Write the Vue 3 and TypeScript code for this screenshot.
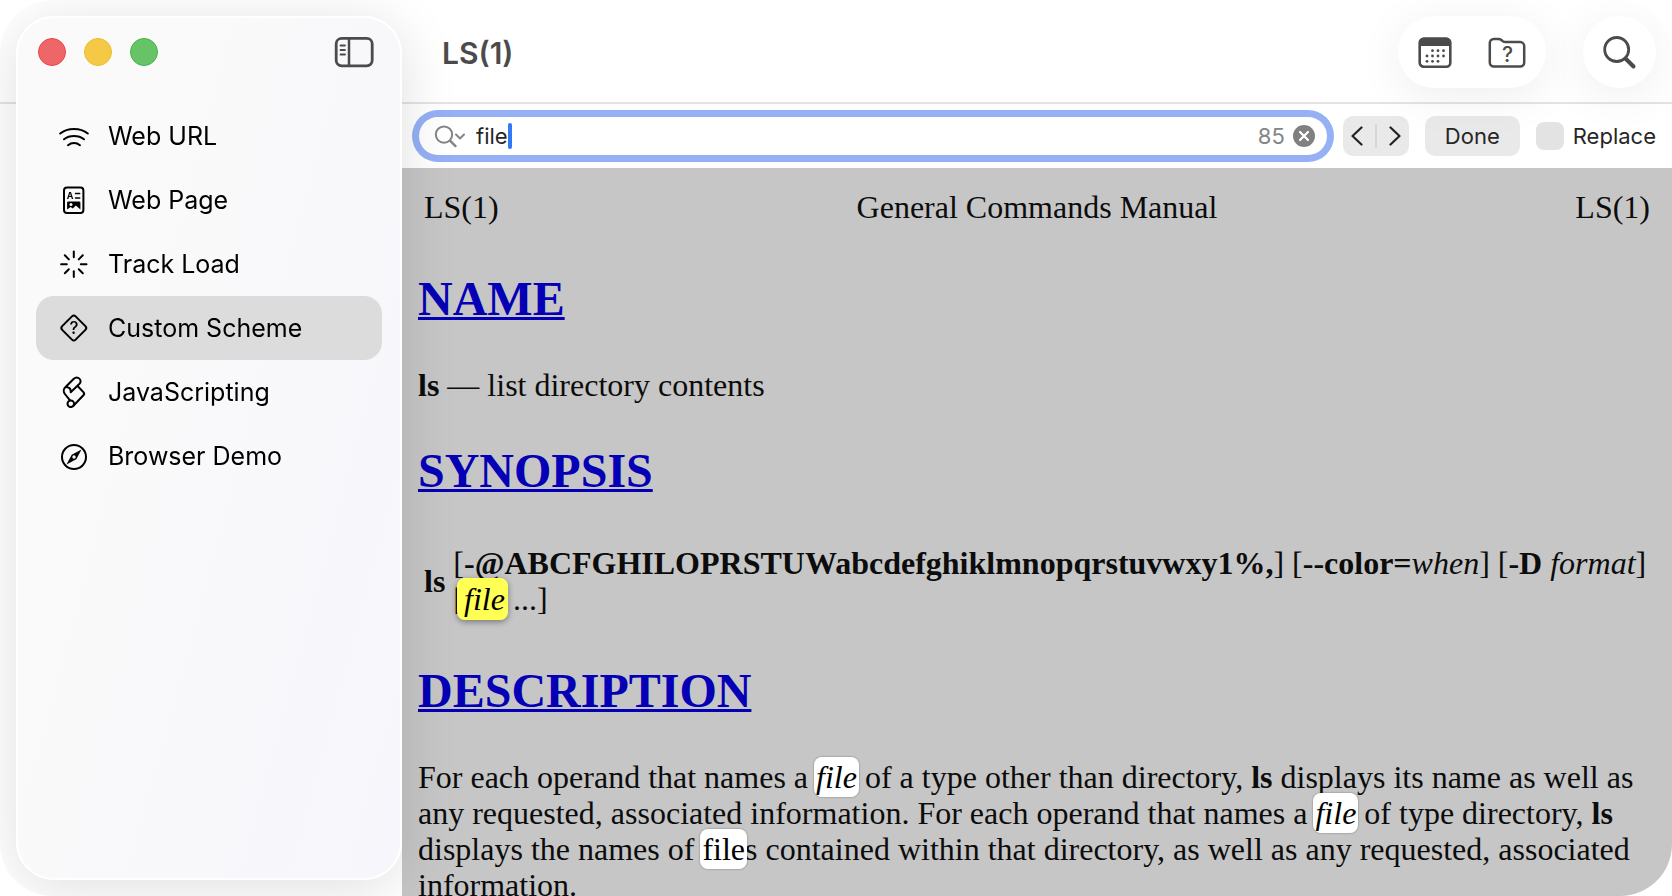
<script setup lang="ts">
import { ref } from 'vue'

type IconName = 'wifi' | 'page' | 'rays' | 'diamond' | 'scroll' | 'compass'

interface NavItem {
  label: string
  icon: IconName
}

const items: NavItem[] = [
  { label: 'Web URL', icon: 'wifi' },
  { label: 'Web Page', icon: 'page' },
  { label: 'Track Load', icon: 'rays' },
  { label: 'Custom Scheme', icon: 'diamond' },
  { label: 'JavaScripting', icon: 'scroll' },
  { label: 'Browser Demo', icon: 'compass' },
]

const selected = ref('Custom Scheme')
const query = ref('file')
const replace = ref(false)
const rayAngles = [0, 45, 90, 135, 180, 225, 270, 315]
</script>

<template>
  <div class="window">
    <header class="titlebar">
      <h2 class="title">LS(1)</h2>
      <div class="pill">
        <button type="button" class="tool" aria-label="Calendar">
          <svg width="36" height="36" viewBox="0 0 36 36" fill="none">
            <rect x="2.7" y="4.7" width="30.6" height="28" rx="4" stroke="#4b4b4b" stroke-width="2.6" />
            <path d="M2 12V8.500a5 5 0 0 1 5-5h22a5 5 0 0 1 5 5V12z" fill="#4b4b4b" />
            <g fill="#4b4b4b">
              <circle cx="15.500" cy="16.700" r="1.4" /><circle cx="21" cy="16.700" r="1.4" /><circle cx="26.500" cy="16.700" r="1.4" />
              <circle cx="10" cy="22" r="1.4" /><circle cx="15.500" cy="22" r="1.4" /><circle cx="21" cy="22" r="1.4" /><circle cx="26.500" cy="22" r="1.4" />
              <circle cx="10" cy="27.300" r="1.4" /><circle cx="15.500" cy="27.300" r="1.4" /><circle cx="21" cy="27.300" r="1.4" />
            </g>
          </svg>
        </button>
        <button type="button" class="tool" aria-label="Unknown folder">
          <svg width="40" height="36" viewBox="0 0 40 36" fill="none">
            <path d="M2.800 9a4 4 0 0 1 4-4h4.600c1.300 0 2 .3 3 1.100l1.400 1.100c.8.600 1.500.9 2.600.9h14.800a4 4 0 0 1 4 4v16.500a4 4 0 0 1-4 4H6.800a4 4 0 0 1-4-4z" stroke="#4b4b4b" stroke-width="2.500" />
            <text x="20.500" y="28" class="glyph" font-size="21" font-weight="500" fill="#4b4b4b">?</text>
          </svg>
        </button>
      </div>
      <button type="button" class="round" aria-label="Search">
        <svg width="36" height="36" viewBox="0 0 36 36" fill="none" stroke="#4b4b4b">
          <circle cx="14.700" cy="15.500" r="12" stroke-width="2.800" />
          <path d="M23.500 24.500l8 8" stroke-width="4" stroke-linecap="round" />
        </svg>
      </button>
    </header>

    <aside class="sidebar">
      <div class="controls">
        <button type="button" class="light red" aria-label="Close"></button>
        <button type="button" class="light yellow" aria-label="Minimize"></button>
        <button type="button" class="light green" aria-label="Zoom"></button>
        <button type="button" class="toggle" aria-label="Toggle sidebar">
          <svg width="40" height="32" viewBox="0 0 40 32" fill="none" stroke="#4b4b4b">
            <rect x="2.200" y="2.300" width="36" height="27.500" rx="5.500" stroke-width="2.800" />
            <path d="M15 2.500V29.500" stroke-width="2.500" />
            <path d="M6.500 9.500h4.500M6.500 14h4.500M6.500 18.500h4.500" stroke-width="1.800" stroke-linecap="round" />
          </svg>
        </button>
      </div>
      <nav class="nav">
        <button
          v-for="item in items"
          :key="item.label"
          type="button"
          class="item"
          :class="{ active: item.label === selected }"
          @click="selected = item.label"
        >
          <svg width="32" height="32" viewBox="0 0 32 32" fill="none" stroke="#000" stroke-width="2" stroke-linecap="round" stroke-linejoin="round">
            <template v-if="item.icon === 'wifi'">
              <path d="M2.200 13.500C9.500 7.500 22.500 7.500 29.800 13.500M6 19.300C11.500 15 20.500 15 26 19.300M10 25.200C13.500 22.400 18.500 22.400 22 25.200" />
            </template>
            <template v-else-if="item.icon === 'page'">
              <rect x="6" y="3.500" width="19.400" height="25.400" rx="3" />
              <text x="12" y="15" class="glyph" font-size="9" font-weight="700" fill="#000" stroke="none">A</text>
              <path d="M17.500 9.500h4.200M17.500 14h4.200" stroke-width="1.500" />
              <path d="M10.500 17.400h10.500a1.400 1.400 0 0 1 1.400 1.400v6.600l-2.200-1.900-2.400-2-3 3-2.200-1.500-3.500 2.400v-6.600a1.400 1.400 0 0 1 1.400-1.400z" fill="#000" stroke="none" />
              <circle cx="13" cy="20.600" r="1.500" fill="#fafafa" stroke="none" />
            </template>
            <template v-else-if="item.icon === 'rays'">
              <path v-for="angle in rayAngles" :key="angle" d="M15.800 9.300V3.600" :transform="`rotate(${angle} 15.800 16.300)`" />
            </template>
            <template v-else-if="item.icon === 'diamond'">
              <rect x="6.300" y="6.500" width="19" height="19" rx="2.600" transform="rotate(45 15.800 16)" />
              <text x="15.900" y="22" class="glyph" font-size="17" font-weight="500" fill="#000" stroke="none">?</text>
            </template>
            <template v-else-if="item.icon === 'scroll'">
              <path d="M11.800 24.200L6.900 18C5.300 15.900 5.400 13 7.300 11.200L15.800 2.700C19.800-.7 24.800 4.200 21.500 7.700L12.700 16.200C12.900 13.700 12 11.600 9 11.300" />
              <path d="M19.800 10.200L25.400 16.100C26.400 17.200 26.400 18.300 25.400 19.300L15.200 30" />
              <circle cx="12.800" cy="27.800" r="3.300" />
            </template>
            <template v-else>
              <circle cx="16" cy="17" r="12" />
              <path d="M23.500 9.500L18.300 19.300L8.500 24.500L13.700 14.700z" fill="#000" stroke="none" />
              <circle cx="16" cy="17" r="1.700" fill="#fafafa" stroke="none" />
            </template>
          </svg>
          <span>{{ item.label }}</span>
        </button>
      </nav>
    </aside>

    <main class="main">
      <form class="findbar" @submit.prevent>
        <label class="field">
          <svg width="32" height="24" viewBox="0 0 32 24" fill="none" stroke="#858585" stroke-width="2" stroke-linecap="round" stroke-linejoin="round">
            <circle cx="10" cy="10.600" r="8.200" />
            <path d="M16 16.600l5.500 5.500" stroke-width="2.400" />
            <path d="M22 10.500l4 4 4-4" />
          </svg>
          <input v-model="query" class="query" type="text" aria-label="Find" spellcheck="false" />
          <span class="caret"></span>
          <span class="count">85</span>
          <button type="button" class="clear" aria-label="Clear" @click="query = ''">
            <svg width="22" height="22" viewBox="0 0 22 22" fill="none">
              <circle cx="11" cy="11" r="11" fill="#808080" />
              <path d="M7 7l8 8M15 7l-8 8" stroke="#fff" stroke-width="2.200" stroke-linecap="round" />
            </svg>
          </button>
        </label>
        <div class="steps">
          <button type="button" class="step" aria-label="Previous match">
            <svg width="12" height="20" viewBox="0 0 12 20" fill="none" stroke="#222" stroke-width="2.200" stroke-linecap="round" stroke-linejoin="round"><path d="M10.500 1.500L1.500 10l9 8.500" /></svg>
          </button>
          <span class="divider"></span>
          <button type="button" class="step" aria-label="Next match">
            <svg width="12" height="20" viewBox="0 0 12 20" fill="none" stroke="#222" stroke-width="2.200" stroke-linecap="round" stroke-linejoin="round"><path d="M1.500 1.500L10.500 10l-9 8.500" /></svg>
          </button>
        </div>
        <button type="button" class="done">Done</button>
        <label class="replace">
          <input v-model="replace" type="checkbox" class="check" />
          <span>Replace</span>
        </label>
      </form>

      <article class="page">
        <div class="head">
          <span>LS(1)</span>
          <span>General Commands Manual</span>
          <span>LS(1)</span>
        </div>

        <h1 id="NAME"><a href="#NAME">NAME</a></h1>
        <p><b>ls</b> — list directory contents</p>

        <h1 id="SYNOPSIS"><a href="#SYNOPSIS">SYNOPSIS</a></h1>
        <div class="synopsis">
          <b>ls</b>
          <div>
            [<b>-@ABCFGHILOPRSTUWabcdefghiklmnopqrstuvwxy1%,</b>]
            [<b>--color=</b><i>when</i>] [<b>-D</b> <i>format</i>]
            [<mark class="current"><i>file</i></mark> ...]
          </div>
        </div>

        <h1 id="DESCRIPTION"><a href="#DESCRIPTION">DESCRIPTION</a></h1>
        <p>
          For each operand that names a <mark><i>file</i></mark> of a type other than directory, <b>ls</b> displays
          its name as well as any requested, associated information. For each operand that names a
          <mark><i>file</i></mark> of type directory, <b>ls</b> displays the names of <mark>file</mark>s contained
          within that directory, as well as any requested, associated information.
        </p>
      </article>
    </main>
  </div>
</template>

<style>
body {
  margin: 0;
  background: #fff;
}
</style>

<style scoped>
.window {
  display: grid;
  grid-template-columns: 402px minmax(0, 1fr);
  grid-template-rows: 104px minmax(0, 1fr);
  height: 100vh;
  overflow: hidden;
  border-radius: 52px;
  background: #fff;
  font-family: Inter, 'Liberation Sans', sans-serif;
}

button {
  display: flex;
  align-items: center;
  justify-content: center;
  margin: 0;
  padding: 0;
  border: 0;
  background: none;
  color: inherit;
  font: inherit;
}

svg {
  display: block;
  flex: none;
}

.glyph {
  font-family: Inter, 'Liberation Sans', sans-serif;
  text-anchor: middle;
}

.titlebar {
  grid-column: 1 / -1;
  grid-row: 1;
  z-index: 1;
  box-sizing: border-box;
  display: flex;
  align-items: flex-start;
  padding: 16px 16px 0 442px;
  border-bottom: 2px solid #e3e3e3;
}

.title {
  flex: 1;
  margin: 0;
  color: #4b4b4b;
  font-size: 30px;
  font-weight: 600;
  line-height: 74px;
}

.pill {
  display: flex;
  align-items: center;
  justify-content: center;
  gap: 34px;
  width: 148px;
  height: 72px;
  margin-right: 37px;
  border-radius: 36px;
  background: #fff;
  box-shadow: 0 8px 48px rgba(0, 0, 0, 0.07);
}

.round {
  width: 73px;
  height: 72px;
  border-radius: 36px;
  background: #fff;
  box-shadow: 0 8px 48px rgba(0, 0, 0, 0.07);
}

.sidebar {
  grid-column: 1;
  grid-row: 1 / -1;
  z-index: 2;
  margin: 16px 0 16px 16px;
  border: 2px solid #fff;
  border-radius: 38px;
  background: linear-gradient(105deg, #fafafa 25%, #f8f8fb 65%, #f6f6fc);
  box-shadow: 0 8px 56px rgba(0, 0, 0, 0.13);
}

.controls {
  display: flex;
  align-items: center;
  gap: 18px;
  height: 68px;
  padding: 0 26px 0 20px;
}

.light {
  width: 28px;
  height: 28px;
  border: 1px solid;
  border-radius: 50%;
}

.red {
  border-color: #e8474a;
  background: #ee6667;
}

.yellow {
  border-color: #eebd2c;
  background: #f3c945;
}

.green {
  border-color: #47b34a;
  background: #66c466;
}

.toggle {
  margin-left: auto;
}

.nav {
  display: flex;
  flex-direction: column;
  padding: 18px 18px 0;
}

.item {
  justify-content: flex-start;
  gap: 18px;
  height: 64px;
  padding: 0 22px;
  border-radius: 18px;
  color: #000;
  font-size: 25px;
  text-align: left;
}

.active {
  background: #dcdcdc;
}

.main {
  grid-column: 2;
  grid-row: 2;
  display: flex;
  flex-direction: column;
  min-height: 0;
}

.findbar {
  display: flex;
  flex: none;
  align-items: center;
  height: 64px;
  gap: 16px;
  padding: 0 16px 0 17px;
  color: #262626;
  font-size: 22px;
}

.field {
  display: flex;
  flex: 1;
  align-items: center;
  height: 38px;
  padding: 0 12px 0 15px;
  border-radius: 19px;
  background: #fff;
  box-shadow: 0 0 0 7px #95b0f5;
}

.query {
  field-sizing: content;
  margin: 0 0 0 10px;
  padding: 0;
  border: 0;
  outline: 0;
  background: none;
  color: inherit;
  font: inherit;
}

.caret {
  width: 4px;
  height: 26px;
  border-radius: 2px;
  background: #3478f6;
}

.count {
  margin: 0 8px 0 auto;
  color: #858585;
}

.steps {
  display: flex;
  align-items: center;
  justify-content: space-between;
  box-sizing: border-box;
  width: 66px;
  height: 40px;
  padding: 0 8px;
  border-radius: 10px;
  background: #e9e9e9;
}

.divider {
  width: 2px;
  height: 24px;
  background: #d6d6d6;
}

.done {
  width: 95px;
  height: 40px;
  border-radius: 10px;
  background: #e9e9e9;
}

.replace {
  display: flex;
  align-items: center;
  gap: 9px;
}

.check {
  width: 28px;
  height: 28px;
  margin: 0;
  border-radius: 8px;
  background: #e3e3e3;
  appearance: none;
}

.check:checked {
  background: #3478f6;
}

.page {
  z-index: 1;
  flex: 1;
  min-height: 0;
  overflow: auto;
  padding: 15px 16px 0;
  background: #c6c6c6;
  color: #0c0c0c;
  font-family: 'Liberation Serif', serif;
  font-size: 32px;
  line-height: 36px;
  scrollbar-width: none;
}

.head {
  display: flex;
  justify-content: space-between;
  padding: 6px;
}

h1 {
  margin: 41px 0;
  font-size: 48px;
  line-height: 54px;
}

h1 a {
  color: #0500b5;
  text-decoration-thickness: 3px;
  text-underline-offset: 2px;
}

p {
  margin: 0;
}

.synopsis {
  display: flex;
  align-items: center;
  gap: 8px;
  padding: 6px;
}

mark {
  position: relative;
  margin: 0 -2px;
  padding: 2px;
  border-radius: 8px;
  background: #fff;
  box-shadow: 0 0 2px rgba(0, 0, 0, 0.45);
  color: #000;
}

.current {
  margin: 0 -3px 0 -7px;
  padding: 3px 3px 3px 7px;
  background: #ffff54;
  box-shadow: 0 2px 6px rgba(0, 0, 0, 0.4);
}
</style>
